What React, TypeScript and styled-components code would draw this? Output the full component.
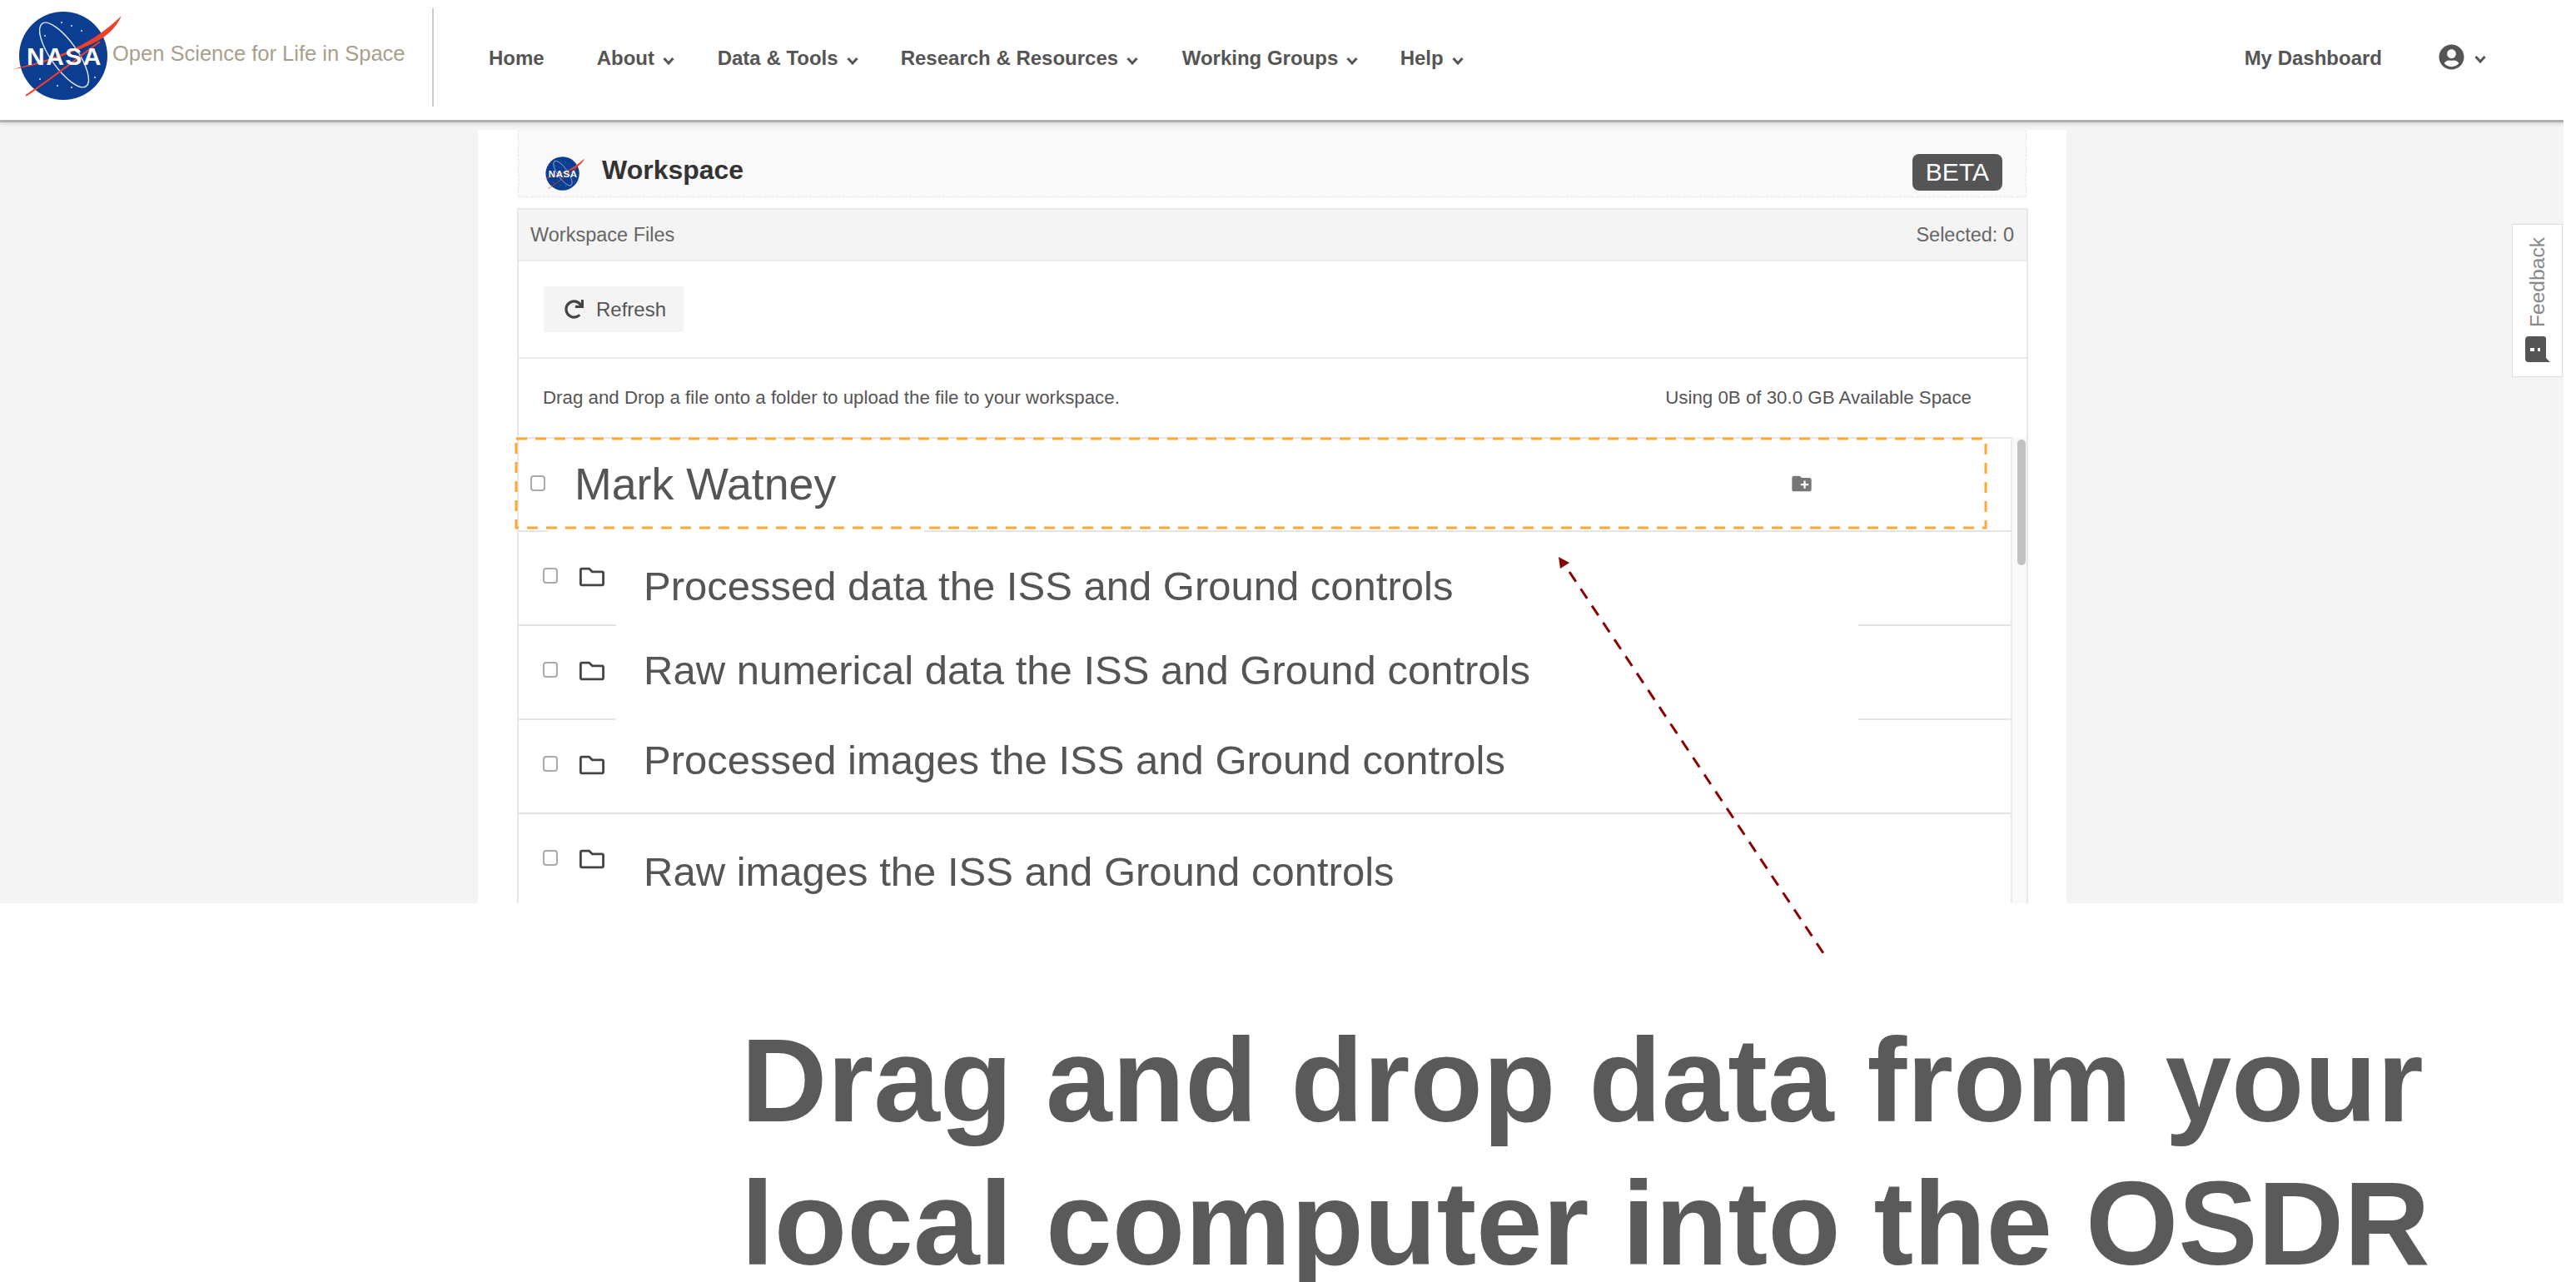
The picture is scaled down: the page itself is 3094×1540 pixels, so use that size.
import React from "react";
import styled, { createGlobalStyle } from "styled-components";
import { FaRedo, FaRegFolder, FaUserCircle } from "react-icons/fa";
import { MdCreateNewFolder } from "react-icons/md";

const GlobalStyle = createGlobalStyle`
  html, body {
    margin: 0;
    padding: 0;
    background: #fff;
    font-family: "Liberation Sans", Arial, sans-serif;
  }
`;

const navItems = [
  { label: "About", width: 95 },
  { label: "Data & Tools", width: 170 },
  { label: "Research & Resources", width: 288 },
  { label: "Working Groups", width: 212 },
  { label: "Help", width: 78 }
];

const rows = [
  { label: "Processed data the ISS and Ground controls", shift: -6 },
  { label: "Raw numerical data the ISS and Ground controls", shift: -18 },
  { label: "Processed images the ISS and Ground controls", shift: -23 },
  { label: "Raw images the ISS and Ground controls", shift: -2 }
];

const NasaLogo = ({ size }: { size: number }) => (
  <svg width={size} height={size} viewBox="0 0 134 124">
    <circle cx="62" cy="62" r="53" fill="#0b3d91" />
    <g fill="#dfe6f2">
      <circle cx="60" cy="22" r="1" />
      <circle cx="72" cy="26" r="1" />
      <circle cx="84" cy="32" r="1" />
      <circle cx="40" cy="38" r="1" />
      <circle cx="34" cy="90" r="1" />
      <circle cx="55" cy="98" r="1" />
      <circle cx="72" cy="100" r="1" />
      <circle cx="100" cy="88" r="1" />
      <circle cx="95" cy="105" r="1" />
    </g>
    <ellipse cx="63" cy="61" rx="16" ry="46" transform="rotate(-35 63 61)" fill="none" stroke="#dfe6f2" strokeWidth="1.5" />
    <path d="M2 78 C40 68 90 55 132 14 C118 44 90 50 62 62 C40 70 20 76 2 78Z" fill="#f0402a" />
    <path d="M17 110 C50 88 80 64 106 45" fill="none" stroke="#f0402a" strokeWidth="2" />
    <text x="18" y="73" fontFamily="'Liberation Sans', sans-serif" fontWeight="700" fontSize="30" fill="#fff" letterSpacing="1.5">NASA</text>
  </svg>
);

const Chevron = () => (
  <ChevronSvg width="14" height="10" viewBox="0 0 14 10">
    <polyline points="1.5,2 7,8 12.5,2" fill="none" stroke="#555" strokeWidth="3" />
  </ChevronSvg>
);

const App = () => (
  <Page>
    <GlobalStyle />
    <Top>
      <Header>
        <Brand>
          <NasaLogo size={134} />
          <BrandName>Open Science for Life in Space</BrandName>
        </Brand>
        <Nav>
          <NavLink>Home</NavLink>
          {navItems.map((item) => (
            <NavLink key={item.label} $width={item.width}>
              {item.label}
              <Chevron />
            </NavLink>
          ))}
        </Nav>
        <UserArea>
          <NavLink>My Dashboard</NavLink>
          <UserMenu>
            <FaUserCircle size={31} color="#555" />
            <Chevron />
          </UserMenu>
        </UserArea>
      </Header>

      <Column>
        <WorkspaceBar>
          <WorkspaceTitle>
            <NasaLogo size={51} />
            Workspace
          </WorkspaceTitle>
          <Beta>BETA</Beta>
        </WorkspaceBar>

        <Panel>
          <PanelHead>
            <span>Workspace Files</span>
            <span>Selected: 0</span>
          </PanelHead>
          <ToolRow>
            <RefreshButton>
              <FaRedo size={23} color="#444" />
              Refresh
            </RefreshButton>
          </ToolRow>
          <InfoRow>
            <span>Drag and Drop a file onto a folder to upload the file to your workspace.</span>
            <span>Using 0B of 30.0 GB Available Space</span>
          </InfoRow>
          <ListWrap>
            <List>
              <RootRow>
                <Check />
                <RootName>Mark Watney</RootName>
                <MdCreateNewFolder size={28} color="#777" />
              </RootRow>
              {rows.map((row) => (
                <FileRow key={row.label}>
                  <Check />
                  <FaRegFolder size={30} color="#444" />
                  <FileName $shift={row.shift}>{row.label}</FileName>
                </FileRow>
              ))}
              <PatchOne />
              <PatchTwo />
            </List>
            <Track>
              <Thumb />
            </Track>
          </ListWrap>
        </Panel>
      </Column>

      <FeedbackTab>
        <FeedbackText>Feedback</FeedbackText>
        <svg width="30" height="31" viewBox="0 0 30 31">
          <path d="M4 0 H22 Q25 0 25 3 V26 L30 31 H4 Q0 31 0 27 V4 Q0 0 4 0Z" fill="#555" />
          <rect x="6" y="14" width="5" height="4" fill="#fff" />
          <rect x="15" y="14" width="3" height="4" fill="#fff" />
        </svg>
      </FeedbackTab>
    </Top>

    <Caption>
      Drag and drop data from your
      <br />
      local computer into the OSDR
    </Caption>

    <Annotations width="3094" height="1540" viewBox="0 0 3094 1540">
      <rect x="620" y="527" width="1765" height="107" fill="none" stroke="#ffa733" strokeWidth="3" strokeDasharray="13 10" />
      <polygon points="1872,669 1885,676 1874,683" fill="#8b0000" />
      <line x1="1885" y1="687" x2="2190" y2="1145" stroke="#8b0000" strokeWidth="3" strokeDasharray="14 10.36" />
    </Annotations>
  </Page>
);

const Page = styled.div`
  position: relative;
  width: 3094px;
  height: 1540px;
  overflow: hidden;
  background: #fff;
`;

const Top = styled.div`
  position: relative;
  width: 3079px;
  height: 1085px;
  overflow: hidden;
  background: #f4f4f4;
`;

const Header = styled.header`
  display: flex;
  align-items: flex-start;
  height: 144px;
  background: #fff;
  border-bottom: 3px solid #b0b0b0;
  box-shadow: 0 2px 4px rgba(0, 0, 0, 0.12);
`;

const Brand = styled.div`
  display: flex;
  align-items: center;
  width: 521px;
  height: 118px;
  margin-top: 10px;
  padding-left: 14px;
  box-sizing: border-box;
  border-right: 2px solid #ccc;

  svg {
    flex: none;
    margin-top: -4px;
  }
`;

const BrandName = styled.span`
  margin: -10px 0 0 -13px;
  font-size: 25.5px;
  color: #a89f8c;
  white-space: nowrap;
`;

const Nav = styled.nav`
  display: flex;
  align-items: center;
  height: 140px;
  margin-left: 66px;
`;

const NavLink = styled.div<{ $width?: number }>`
  display: flex;
  align-items: center;
  gap: 10px;
  width: ${(p) => (p.$width ? `${p.$width}px` : "auto")};
  margin-right: ${(p) => (p.$width ? "50px" : "63px")};
  font-size: 24px;
  font-weight: 700;
  color: #555;
  white-space: nowrap;
`;

const ChevronSvg = styled.svg`
  flex: none;
  margin-top: 6px;
`;

const UserArea = styled.div`
  display: flex;
  align-items: center;
  height: 140px;
  margin-left: auto;
  padding-right: 93px;
`;

const UserMenu = styled.div`
  display: flex;
  align-items: center;
  gap: 12px;
  margin: -4px 0 0 5px;
`;

const Column = styled.main`
  width: 1908px;
  height: 940px;
  margin: 9px 0 0 574px;
  padding: 0 46px 0 47px;
  box-sizing: border-box;
  background: #fff;
`;

const WorkspaceBar = styled.div`
  display: flex;
  align-items: center;
  justify-content: space-between;
  height: 81px;
  margin: 0 2px 0 1px;
  padding: 22px 28px 0 29px;
  box-sizing: border-box;
  background: #f9f9f9;
  border: 1px dashed #e6e6e6;
  border-top: 0;
`;

const WorkspaceTitle = styled.div`
  display: flex;
  align-items: center;
  gap: 20px;
  margin-top: -5px;
  font-size: 32px;
  font-weight: 700;
  color: #333;

  svg {
    margin-top: 8px;
  }
`;

const Beta = styled.div`
  padding: 6px 16px;
  border-radius: 8px;
  background: #555;
  color: #fff;
  font-size: 30px;
  line-height: 32px;
`;

const Panel = styled.section`
  margin-top: 13px;
  border: 2px solid #e8e8e8;
  border-bottom: 0;
`;

const PanelHead = styled.div`
  display: flex;
  align-items: center;
  justify-content: space-between;
  height: 60px;
  padding: 0 15px 0 14px;
  background: #f4f4f4;
  border-bottom: 2px solid #ececec;
  font-size: 23.5px;
  color: #666;
`;

const ToolRow = styled.div`
  display: flex;
  align-items: center;
  height: 117px;
  padding-left: 30px;
  box-sizing: border-box;
  border-bottom: 2px solid #ececec;
`;

const RefreshButton = styled.div`
  display: flex;
  align-items: center;
  gap: 15px;
  height: 55px;
  padding: 0 21px 0 25px;
  background: #f4f4f4;
  font-size: 24px;
  color: #555;
`;

const InfoRow = styled.div`
  display: flex;
  align-items: center;
  justify-content: space-between;
  height: 94px;
  padding: 0 66px 0 29px;
  box-sizing: border-box;
  font-size: 22.3px;
  color: #555;
`;

const ListWrap = styled.div`
  display: flex;
  height: 570px;
`;

const List = styled.div`
  position: relative;
  flex: 1;
  min-width: 0;
  border-top: 2px solid #e8e8e8;
`;

const RootRow = styled.div`
  display: flex;
  align-items: center;
  height: 112px;
  padding: 0 0 3px 14px;
  box-sizing: border-box;
  border-bottom: 2px solid #e4e4e4;

  svg {
    flex: none;
    margin-left: 460px;
  }
`;

const Check = styled.span`
  flex: none;
  width: 18px;
  height: 19px;
  box-sizing: border-box;
  border: 2px solid #aaa;
  border-radius: 4px;
  background: #fff;
`;

const RootName = styled.span`
  flex: none;
  width: 1000px;
  margin-left: 35px;
  font-size: 53.7px;
  color: #555;
  white-space: nowrap;
`;

const FileRow = styled.div`
  display: flex;
  align-items: flex-start;
  height: 113px;
  padding: 43px 0 0 29px;
  box-sizing: border-box;
  border-bottom: 2px solid #e4e4e4;

  svg {
    flex: none;
    margin: -4px 0 0 26px;
  }
`;

const FileName = styled.span<{ $shift: number }>`
  position: relative;
  top: ${(p) => p.$shift}px;
  margin-left: 47px;
  font-size: 49px;
  line-height: 56px;
  color: #555;
  white-space: nowrap;
`;

const PatchOne = styled.div`
  position: absolute;
  left: 35px;
  top: 108px;
  width: 452px;
  height: 6px;
  background: #fff;
`;

const PatchTwo = styled.div`
  position: absolute;
  left: 117px;
  top: 218px;
  width: 1492px;
  height: 125px;
  box-sizing: border-box;
  border-top: 8px solid #fff;
  border-bottom: 8px solid #fff;
`;

const Track = styled.div`
  flex: none;
  width: 19px;
  box-sizing: border-box;
  padding: 3px 1px 0 6px;
  background: #f9f9f9;
  border-left: 2px solid #ececec;
`;

const Thumb = styled.div`
  width: 10px;
  height: 151px;
  border-radius: 5px;
  background: #c2c2c2;
`;

const FeedbackTab = styled.aside`
  position: absolute;
  top: 269px;
  right: 1px;
  display: flex;
  flex-direction: column;
  align-items: center;
  justify-content: space-between;
  width: 61px;
  height: 184px;
  padding: 15px 0 17px;
  box-sizing: border-box;
  background: #fff;
  border: 1px solid #ddd;
`;

const FeedbackText = styled.span`
  writing-mode: vertical-rl;
  transform: rotate(180deg);
  font-size: 24.6px;
  color: #888;
`;

const Caption = styled.h1`
  margin: 0;
  padding: 126px 0 0 890px;
  font-size: 143.2px;
  line-height: 172px;
  font-weight: 700;
  color: #5a5a5a;
  white-space: nowrap;
`;

const Annotations = styled.svg`
  position: absolute;
  left: 0;
  top: 0;
  pointer-events: none;
`;

export default App;
